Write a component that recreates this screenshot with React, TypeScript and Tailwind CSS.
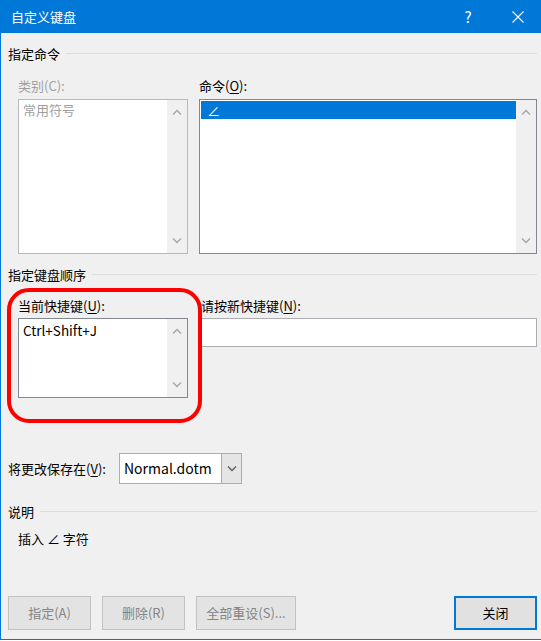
import React from "react";

const font = {
  fontFamily: '"Noto Sans CJK SC", "Noto Sans", sans-serif',
};

const Chevron = ({ up, color = "#a6a6a6" }: { up?: boolean; color?: string }) => (
  <svg width="10" height="6" viewBox="0 0 10 6" className="block">
    <polyline
      points={up ? "1,5.5 5,1.5 9,5.5" : "1,0.5 5,4.5 9,0.5"}
      fill="none"
      stroke={color}
      strokeWidth="1.4"
    />
  </svg>
);

const ScrollBar = () => (
  <div className="w-[20px] h-full bg-[#f0f0f0] flex flex-col items-center justify-between py-[9px]">
    <Chevron up />
    <Chevron />
  </div>
);

const GroupTitle = ({ text, line }: { text: string; line: string }) => (
  <div className="h-[20px] flex items-center pl-[7px] pr-[4px]">
    <span className="text-[13px] text-black leading-none">{text}</span>
    <div className={`${line} flex-1 h-px bg-[#dcdcdc]`} />
  </div>
);

const Mn = ({ c }: { c: string }) => <span className="underline underline-offset-2">{c}</span>;

export default function App() {
  return (
    <div
      style={font}
      className="relative w-[541px] h-[640px] bg-[#f0f0f0] border-l border-b border-[#0078d7] flex flex-col text-[13px] text-black"
    >
      {/* title bar */}
      <div className="h-[33px] bg-[#0078d7] flex items-center text-white shrink-0 -ml-px pl-[11px]">
        <span className="text-[13px] leading-none">自定义键盘</span>
        <div className="flex-1" />
        <span className="w-[20px] text-center text-[15px] leading-none mr-[34px]">?</span>
        <svg width="12" height="12" viewBox="0 0 12 12" className="mr-[17px]">
          <path d="M0.5 0.5 L11.5 11.5 M11.5 0.5 L0.5 11.5" stroke="white" strokeWidth="1.1" />
        </svg>
      </div>

      {/* 指定命令 */}
      <div className="mt-[10px]">
        <GroupTitle text="指定命令" line="ml-[6px]" />
      </div>

      <div className="flex mt-[13px] pl-[17px] pr-[4px] gap-[11px]">
        <div className="w-[170px] flex flex-col">
          <div className="h-[20px] flex items-center text-[#a0a0a0]">类别(C):</div>
          <div className="mt-[3px] h-[155px] border border-[#b9b9b9] bg-white flex">
            <div className="flex-1 pl-[4px] pt-[1px] text-[#a0a0a0] leading-[18px]">常用符号</div>
            <ScrollBar />
          </div>
        </div>
        <div className="flex-1 flex flex-col">
          <div className="h-[20px] flex items-center">
            命令(<Mn c="O" />):
          </div>
          <div className="mt-[3px] h-[155px] border border-[#828790] bg-white flex">
            <div className="flex-1 pt-[1px] pl-[1px]">
              <div className="h-[18px] bg-[#0078d7] text-white flex items-center pl-[6px] leading-none">∠</div>
            </div>
            <ScrollBar />
          </div>
        </div>
      </div>

      {/* 指定键盘顺序 */}
      <div className="mt-[10px]">
        <GroupTitle text="指定键盘顺序" line="ml-[6px]" />
      </div>

      <div className="flex mt-[12px] pl-[17px] pr-[4px] gap-[11px]">
        <div className="w-[170px] flex flex-col">
          <div className="h-[20px] flex items-center">
            当前快捷键(<Mn c="U" />):
          </div>
          <div className="mt-[2px] h-[80px] border border-[#828790] bg-white flex">
            <div className="flex-1 pl-[4px] pt-[2px] leading-[18px] text-[13.5px]">Ctrl+Shift+J</div>
            <ScrollBar />
          </div>
        </div>
        <div className="flex-1 flex flex-col">
          <div className="h-[20px] flex items-center pl-[2px]">
            请按新快捷键(<Mn c="N" />):
          </div>
          <div className="mt-[2px] h-[29px] border border-[#abadb3] bg-white" />
        </div>
      </div>

      {/* 将更改保存在 */}
      <div className="mt-[55px] h-[31px] flex items-center pl-[7px]">
        <span className="w-[111px]">
          将更改保存在(<Mn c="V" />):
        </span>
        <div className="w-[123px] h-[31px] border border-[#abadb3] bg-white flex">
          <div className="flex-1 flex items-center pl-[4px] text-[14px]">Normal.dotm</div>
          <div className="w-[20px] h-full bg-[#e5e5e5] border-l border-[#acacac] flex items-center justify-center">
            <Chevron color="#606060" />
          </div>
        </div>
      </div>

      {/* 说明 */}
      <div className="mt-[17px]">
        <GroupTitle text="说明" line="ml-[6px]" />
      </div>
      <div className="mt-[8px] h-[20px] flex items-center pl-[17px]">插入 ∠ 字符</div>

      <div className="flex-1" />

      {/* buttons */}
      <div className="h-[34px] flex pl-[7px] pr-[4px] mb-[9px]">
        <button className="w-[83px] h-full bg-[#e3e3e3] border border-[#c2c2c2] text-[#858585] text-[13px]">
          指定(A)
        </button>
        <button className="ml-[11px] w-[83px] h-full bg-[#e3e3e3] border border-[#c2c2c2] text-[#858585] text-[13px]">
          删除(R)
        </button>
        <button className="ml-[11px] w-[100px] h-full bg-[#e3e3e3] border border-[#c2c2c2] text-[#858585] text-[13px]">
          全部重设(S)...
        </button>
        <div className="flex-1" />
        <button className="w-[83px] h-full bg-[#e1e1e1] border-2 border-[#0078d7] text-black text-[13px]">
          关闭
        </button>
      </div>

      {/* red annotation */}
      <div className="absolute left-[6px] top-[288px] w-[195px] h-[135px] border-[4px] border-[#ff0000] rounded-[22px] pointer-events-none" />
    </div>
  );
}
